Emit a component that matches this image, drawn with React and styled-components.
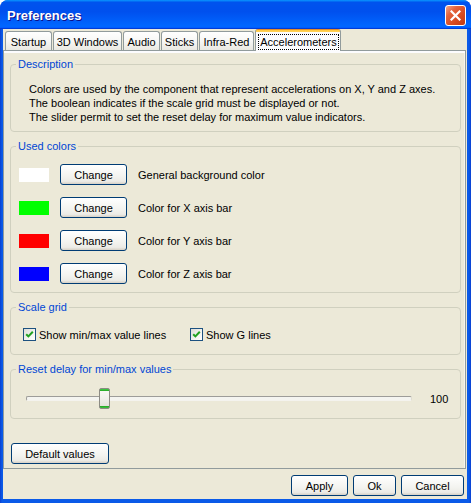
import React from "react";
import styled, { createGlobalStyle } from "styled-components";

const GlobalStyle = createGlobalStyle`
  html, body { margin: 0; padding: 0; background: #ffffff; }
  body { font-family: "Liberation Sans", Arial, sans-serif; font-size: 11px; color: #000; }
  * { box-sizing: border-box; }
`;

const Window = styled.div`
  width: 471px;
  height: 503px;
  display: flex;
  flex-direction: column;
  border-radius: 8px 8px 0 0;
  overflow: hidden;
  background: linear-gradient(90deg, #0b3fd0 0px, #0a5ae8 2px, #0a5ae8 calc(100% - 2px), #0b3fd0 100%);
`;

const TitleBar = styled.div`
  height: 29px;
  flex: none;
  display: flex;
  align-items: flex-start;
  justify-content: space-between;
  padding: 0 5px 0 7px;
  background: linear-gradient(180deg, #0997ff, #0053ee 8%, #0050ee 40%, #0066ff 88%, #0066ff 93%, #005bff 95%, #003dd7 96%, #003dd7);
`;

const Title = styled.span`
  margin-top: 8px;
  font-family: "Liberation Sans", Arial, sans-serif;
  font-weight: bold;
  font-size: 13px;
  line-height: 16px;
  color: #ffffff;
  text-shadow: 1px 1px 0 #0f1089;
`;

const CloseButton = styled.button`
  margin-top: 5px;
  width: 21px;
  height: 21px;
  padding: 0;
  display: flex;
  align-items: center;
  justify-content: center;
  border: 1px solid #ffffff;
  border-radius: 3px;
  background: linear-gradient(135deg, #f3a78c 0%, #e4643d 30%, #d74a20 65%, #c23a12 100%);
`;

const Body = styled.div`
  flex: 1;
  display: flex;
  flex-direction: column;
  margin: 0 4px 4px 3px;
  background: #ece9d8;
`;

const TabStrip = styled.div`
  height: 21px;
  flex: none;
  display: flex;
  align-items: flex-end;
  gap: 1px;
  padding-left: 2px;
`;

const Tab = styled.div`
  width: ${(p) => p.$w}px;
  height: 19px;
  border: 1px solid #919b9c;
  border-bottom: none;
  border-radius: 3px 3px 0 0;
  background: linear-gradient(180deg, #ffffff 0%, #f7f7f5 50%, #e9e8e1 100%);
  text-align: center;
  line-height: 18px;
  padding-top: 1px;
  white-space: nowrap;
`;

const ActiveTab = styled.div`
  width: ${(p) => p.$w}px;
  height: 22px;
  margin-bottom: -1px;
  position: relative;
  z-index: 1;
  border: 1px solid #919b9c;
  border-top: none;
  border-bottom: none;
  border-radius: 3px 3px 0 0;
  background: linear-gradient(180deg, #e68b2c 0px, #e68b2c 1px, #ffc73c 1px, #ffd35e 3px, #fcfcfe 3px);
  padding: 5px 1px 0 2px;
`;

const FocusRing = styled.span`
  display: block;
  height: 16px;
  border: 1px dotted #000000;
  text-align: center;
  line-height: 14px;
  white-space: nowrap;
`;

const Panel = styled.div`
  height: 419px;
  flex: none;
  margin-right: 1px;
  border: 1px solid #919b9c;
  background: #ece9d8;
  box-shadow: inset 0 2px 0 #fcfcfe, inset -1px 0 0 #f6f5ee;
  padding: 6px 4px 4px 6px;
  display: flex;
  flex-direction: column;
  align-items: flex-start;
`;

const GroupStack = styled.div`
  align-self: stretch;
  display: flex;
  flex-direction: column;
  gap: 7px;
`;

const Group = styled.fieldset`
  margin: 0;
  padding: 0;
  min-width: 0;
  border: 1px solid #d0d0bf;
  border-radius: 4px;
`;

const Legend = styled.legend`
  margin-left: 5px;
  padding: 0 2px;
  line-height: 14px;
  font-size: 11px;
  color: #0046d5;
`;

const GroupBody = styled.div`
  padding: ${(p) => p.$pad};
  display: flex;
  flex-direction: column;
  gap: ${(p) => p.$gap || 0}px;
`;

const TextLine = styled.div`
  line-height: 14px;
  white-space: nowrap;
`;

const ColorRow = styled.div`
  height: 21px;
  display: flex;
  align-items: center;
`;

const Swatch = styled.div`
  width: 30px;
  height: 14px;
  margin-right: 11px;
  background: ${(p) => p.$color};
`;

const Button = styled.button`
  width: ${(p) => p.$w}px;
  height: 21px;
  flex: none;
  padding: 0;
  font-family: inherit;
  font-size: 11px;
  color: #000000;
  border: 1px solid #003c74;
  border-radius: 3px;
  background: linear-gradient(180deg, #ffffff 0%, #f3f3ef 60%, #ecebe6 86%, #d6d0c5 100%);
  margin-right: ${(p) => p.$mr || 0}px;
`;

const RowLabel = styled.span`
  white-space: nowrap;
`;

const CheckRow = styled.div`
  height: 21px;
  display: flex;
  align-items: center;
`;

const CheckItem = styled.label`
  width: ${(p) => (p.$w ? `${p.$w}px` : "auto")};
  flex: none;
  display: flex;
  align-items: center;
  gap: 3px;
`;

const CheckBox = styled.span`
  width: 13px;
  height: 13px;
  border: 1px solid #1c5180;
  background: linear-gradient(135deg, #dcdcd7 0%, #f4f4f0 60%, #ffffff 100%);
  display: flex;
  align-items: center;
  justify-content: center;
`;

const SliderRow = styled.div`
  height: 21px;
  display: flex;
  align-items: center;
`;

const SliderTrack = styled.div`
  position: relative;
  width: ${(p) => p.$w}px;
  height: 5px;
  border: 1px solid #9d9c99;
  border-right-color: #dedcd0;
  border-bottom-color: #f4f3ee;
  border-radius: 2px;
  background: #f4f4f0;
`;

const Thumb = styled.div`
  position: absolute;
  top: -9px;
  width: 11px;
  height: 21px;
  border: 1px solid #8c8b84;
  border-radius: 2px;
  background: linear-gradient(180deg, #45d04a 0px, #21a421 2px, #f7f7f4 2px, #efefea 50%, #e3e2da calc(100% - 2px), #21a421 calc(100% - 2px), #3ec243 100%);
`;

const SliderValue = styled.span`
  margin-left: 18px;
  white-space: nowrap;
`;

const DefaultRow = styled.div`
  margin-top: 24px;
  margin-left: 1px;
`;

const ButtonBar = styled.div`
  flex: 1;
  display: flex;
  justify-content: flex-end;
  align-items: flex-start;
  gap: 5px;
  padding: 6px 3px 0 0;
`;

const colors = [
  { color: "#ffffff", label: "General background color" },
  { color: "#00ff00", label: "Color for X axis bar" },
  { color: "#ff0000", label: "Color for Y axis bar" },
  { color: "#0000ff", label: "Color for Z axis bar" },
];

const tabs = [
  { label: "Startup", w: 47 },
  { label: "3D Windows", w: 69 },
  { label: "Audio", w: 37 },
  { label: "Sticks", w: 37 },
  { label: "Infra-Red", w: 55 },
];

function Check() {
  return (
    <CheckBox>
      <svg width="9" height="9" viewBox="0 0 9 9">
        <path d="M1.2 4.2 L3.4 6.4 L7.8 1.8" fill="none" stroke="#21a121" strokeWidth="2" />
      </svg>
    </CheckBox>
  );
}

export default function App() {
  const trackW = 386;
  const thumbW = 11;
  const min = 0;
  const max = 520;
  const value = 100;
  const thumbLeft = ((value - min) / (max - min)) * (trackW - 2 - thumbW);

  return (
    <>
      <GlobalStyle />
      <Window>
        <TitleBar>
          <Title>Preferences</Title>
          <CloseButton aria-label="Close">
            <svg width="11" height="11" viewBox="0 0 11 11">
              <path d="M1.5 1.5 L9.5 9.5 M9.5 1.5 L1.5 9.5" stroke="#ffffff" strokeWidth="2.2" strokeLinecap="square" />
            </svg>
          </CloseButton>
        </TitleBar>
        <Body>
          <TabStrip>
            {tabs.map((t) => (
              <Tab key={t.label} $w={t.w}>{t.label}</Tab>
            ))}
            <ActiveTab $w={86}>
              <FocusRing>Accelerometers</FocusRing>
            </ActiveTab>
          </TabStrip>
          <Panel>
            <GroupStack>
              <Group>
                <Legend>Description</Legend>
                <GroupBody $pad="11px 8px 7px 18px">
                  <TextLine>Colors are used by the component that represent accelerations on X, Y and Z axes.</TextLine>
                  <TextLine>The boolean indicates if the scale grid must be displayed or not.</TextLine>
                  <TextLine>The slider permit to set the reset delay for maximum value indicators.</TextLine>
                </GroupBody>
              </Group>
              <Group>
                <Legend>Used colors</Legend>
                <GroupBody $pad="11px 8px 8px 8px" $gap={12}>
                  {colors.map((c) => (
                    <ColorRow key={c.label}>
                      <Swatch $color={c.color} />
                      <Button $w={67} $mr={11}>Change</Button>
                      <RowLabel>{c.label}</RowLabel>
                    </ColorRow>
                  ))}
                </GroupBody>
              </Group>
              <Group>
                <Legend>Scale grid</Legend>
                <GroupBody $pad="10px 8px 9px 12px">
                  <CheckRow>
                    <CheckItem $w={167}>
                      <Check />
                      <span>Show min/max value lines</span>
                    </CheckItem>
                    <CheckItem>
                      <Check />
                      <span>Show G lines</span>
                    </CheckItem>
                  </CheckRow>
                </GroupBody>
              </Group>
              <Group>
                <Legend>Reset delay for min/max values</Legend>
                <GroupBody $pad="12px 8px 9px 15px">
                  <SliderRow>
                    <SliderTrack $w={trackW}>
                      <Thumb style={{ left: `${thumbLeft}px` }} />
                    </SliderTrack>
                    <SliderValue>{value}</SliderValue>
                  </SliderRow>
                </GroupBody>
              </Group>
            </GroupStack>
            <DefaultRow>
              <Button $w={98}>Default values</Button>
            </DefaultRow>
          </Panel>
          <ButtonBar>
            <Button $w={57}>Apply</Button>
            <Button $w={43}>Ok</Button>
            <Button $w={63}>Cancel</Button>
          </ButtonBar>
        </Body>
      </Window>
    </>
  );
}
